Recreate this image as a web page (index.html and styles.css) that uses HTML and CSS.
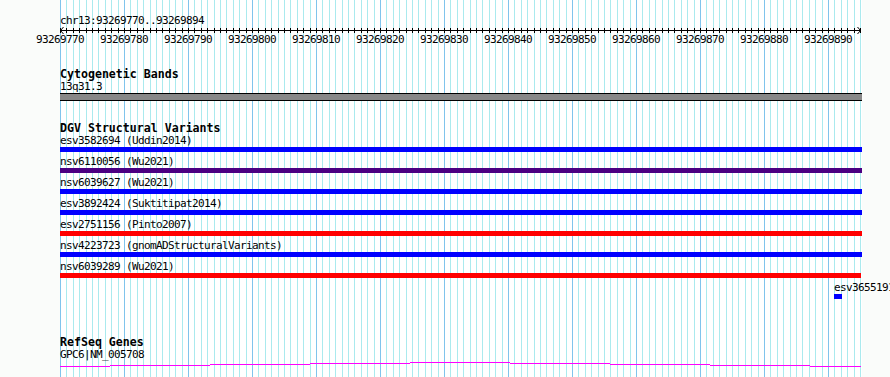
FILE: index.html
```html
<html>
<head>
<title>Genome Browser</title>
<link rel="stylesheet" href="styles.css">
</head>
<body>
<div class="browser">
    <svg class="guides" id="guides" width="890" height="377"></svg>
    <div class="tracks">
	<div class="position">chr13:93269770..93269894</div>
	<svg class="axis" id="axis" width="802" height="9"></svg>
	<div class="ruler_nums">
	    <span>93269770</span><span>93269780</span><span>93269790</span><span>93269800</span>
	    <span>93269810</span><span>93269820</span><span>93269830</span><span>93269840</span>
	    <span>93269850</span><span>93269860</span><span>93269870</span><span>93269880</span>
	    <span>93269890</span>
	</div>

	<div class="track_title band_title">Cytogenetic Bands</div>
	<div class="label">13q31.3</div>
	<div class="band_bar"></div>

	<div class="track_title dgv_title">DGV Structural Variants</div>
	<div class="sv"><div class="label">esv3582694 (Uddin2014)</div><div class="sv_bar blue"></div></div>
	<div class="sv"><div class="label">nsv6110056 (Wu2021)</div><div class="sv_bar purple"></div></div>
	<div class="sv"><div class="label">nsv6039627 (Wu2021)</div><div class="sv_bar blue"></div></div>
	<div class="sv"><div class="label">esv3892424 (Suktitipat2014)</div><div class="sv_bar blue"></div></div>
	<div class="sv"><div class="label">esv2751156 (Pinto2007)</div><div class="sv_bar red"></div></div>
	<div class="sv"><div class="label">nsv4223723 (gnomADStructuralVariants)</div><div class="sv_bar blue"></div></div>
	<div class="sv"><div class="label">nsv6039289 (Wu2021)</div><div class="sv_bar red short"></div></div>
	<div class="sv sv_small"><div class="label">esv3655191</div><div class="sv_bar blue"></div></div>

	<div class="track_title refseq_title">RefSeq Genes</div>
	<div class="label">GPC6|NM_005708</div>
	<svg class="gene" width="802" height="5" shape-rendering="crispEdges">
	    <rect x="0" y="4" width="50" height="1" fill="#ff00ff"/>
	    <rect x="50" y="3" width="100" height="1" fill="#ff00ff"/>
	    <rect x="150" y="2" width="100" height="1" fill="#ff00ff"/>
	    <rect x="250" y="1" width="100" height="1" fill="#ff00ff"/>
	    <rect x="350" y="0" width="100" height="1" fill="#ff00ff"/>
	    <rect x="450" y="1" width="100" height="1" fill="#ff00ff"/>
	    <rect x="550" y="2" width="100" height="1" fill="#ff00ff"/>
	    <rect x="650" y="3" width="100" height="1" fill="#ff00ff"/>
	    <rect x="750" y="4" width="51" height="1" fill="#ff00ff"/>
	</svg>
    </div>
</div>
<script type="text/javascript">
// guide lines, one per base, darker every 10 bases
var guides = "<rect x='60' y='0' width='802' height='377' fill='#ffffff'/>";
for (var i = 0; i <= 125; i++) {
    var x = 60 + Math.round(i * 6.4);
    var color = (i % 10 == 0) ? "#80c4ec" : "#aaeaee";
    guides += "<rect x='" + x + "' y='0' width='1' height='377' fill='" + color + "'/>";
}
document.getElementById("guides").innerHTML = guides;

// ruler axis with a tick per base
var axis = "<rect x='0' y='4' width='801' height='1' fill='#000'/>";
for (var i = 0; i <= 125; i++) {
    axis += "<rect x='" + Math.round(i * 6.4) + "' y='2' width='1' height='5' fill='#000'/>";
}
axis += "<polyline points='3.5,1 0.5,4.5 3.5,8' fill='none' stroke='#000' stroke-width='1'/>";
axis += "<polyline points='797.5,1 800.5,4.5 797.5,8' fill='none' stroke='#000' stroke-width='1'/>";
document.getElementById("axis").innerHTML = axis;
</script>
</body>
</html>
```

FILE: styles.css
```css
body {
    margin: 0;
    background-color: #FAFCFA;
    font-family: "DejaVu Sans Mono", "Liberation Mono", monospace;
    color: #000000;
}

.browser {
    position: relative;
    width: 890px;
    height: 377px;
    overflow: hidden;
}
.guides {
    position: absolute;
    left: 0;
    top: 0;
}
.tracks {
    position: relative;
    padding-left: 60px;
}

.position, .label, .ruler_nums {
    font-size: 11px;
    letter-spacing: -0.62px;
    line-height: 10px;
    height: 10px;
    white-space: nowrap;
}
.position {
    padding-top: 16px;
}
.axis {
    display: block;
}
.ruler_nums {
    display: flex;
    margin-left: -32px;
}
.ruler_nums > span {
    width: 64px;
    flex: none;
    text-align: center;
}

.track_title {
    font-size: 11.6px;
    font-weight: 700;
    line-height: 12px;
    height: 12px;
    white-space: nowrap;
}
.band_title {
    margin-top: 23px;
}
.band_title + .label {
    margin-top: 2px;
}
.band_bar {
    margin-top: 1px;
    width: 802px;
    height: 6px;
    background-color: #888888;
    border-top: 1px solid #000000;
    border-bottom: 1px solid #000000;
}

.dgv_title {
    margin-top: 21px;
}
.sv {
    margin-top: 5px;
}
.dgv_title + .sv {
    margin-top: 2px;
}
.sv_bar {
    margin-top: 1px;
    width: 802px;
    height: 5px;
}
.sv_bar.short {
    width: 801px;
}
.sv_small .label,
.sv_small .sv_bar {
    margin-left: 774px;
}
.sv_small .sv_bar {
    width: 8px;
}
.blue {
    background-color: #0000FF;
}
.purple {
    background-color: #4B0082;
}
.red {
    background-color: #FF0000;
}

.refseq_title {
    margin-top: 37px;
}
.refseq_title + .label {
    margin-top: 2px;
}
.gene {
    display: block;
    margin-top: 2px;
}
```
